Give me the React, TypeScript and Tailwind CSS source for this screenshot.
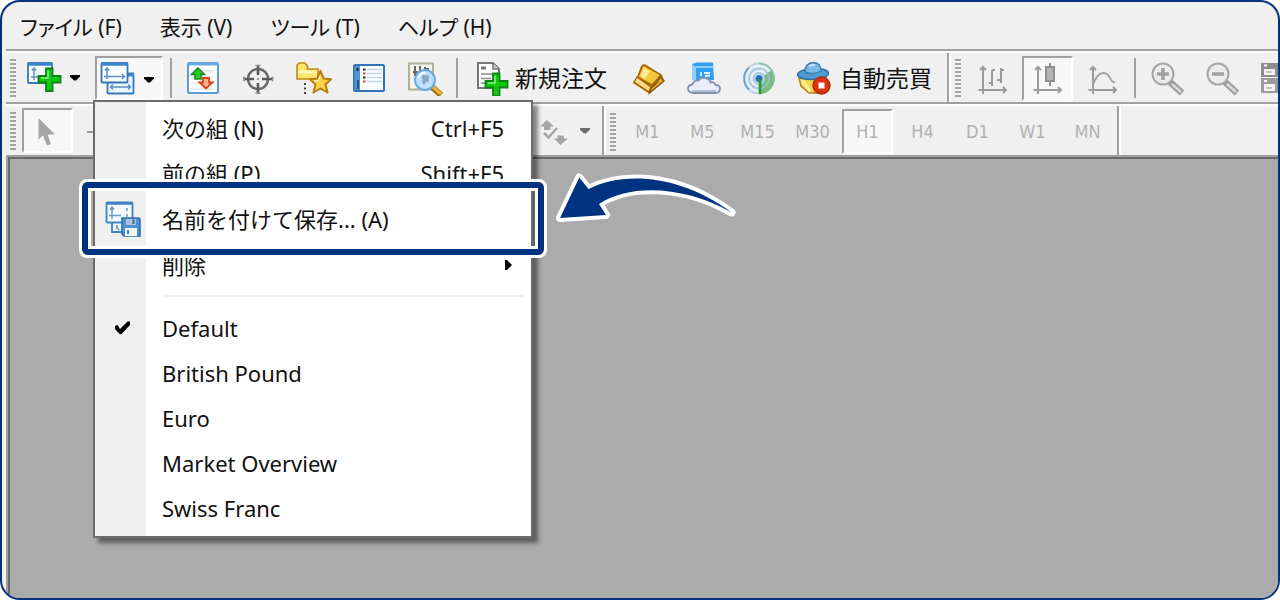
import { FC, ReactNode } from "react";
import clsx from "clsx";

type IconProps = { children: ReactNode };

const Icon: FC<IconProps> = ({ children }) => (
  <svg width="36" height="36" viewBox="0 0 36 36" fill="none" className="shrink-0" aria-hidden="true">
    {children}
  </svg>
);

const Caret: FC<{ className?: string }> = ({ className }) => (
  <svg width="10" height="6" viewBox="0 0 10 6" className={clsx("shrink-0", className)} aria-hidden="true">
    <path d="M0 0H10V1.5L6 5.5H4L0 1.5Z" fill="currentColor" />
  </svg>
);

const Grip = () => (
  <div className="mx-1 h-[38px] w-[6px] shrink-0 bg-[repeating-linear-gradient(#a3a3a3_0_2px,#f4f4f4_2px_4px)]" />
);

const Separator = () => <div className="h-10 w-[2px] shrink-0 bg-[#a0a0a0]" />;

const ToolButton: FC<{
  label: string;
  className?: string;
  pressed?: boolean;
  children: ReactNode;
}> = ({ label, className, pressed, children }) => (
  <button
    type="button"
    aria-label={label}
    className={clsx(
      "flex shrink-0 items-center justify-center",
      pressed && "border-2 border-t-[#a0a0a0] border-r-white border-b-white border-l-[#a0a0a0] bg-[#f7f7f7]",
      className
    )}
  >
    {children}
  </button>
);

// icons

const GreenPlus: FC<{ x: number; y: number }> = ({ x, y }) => (
  <g transform={`translate(${x} ${y})`}>
    <path d="M8 0.5H14.5V8H22.5V14.5H14.5V23H8V14.5H0.5V8H8Z" fill="#12c812" stroke="#0a8412" strokeWidth="1.8" />
    <path d="M10 2.5V10H3" stroke="#8af08a" strokeWidth="1.6" />
  </g>
);

const NewChartIcon = () => (
  <Icon>
    <rect x="2" y="3" width="24" height="20" rx="1" fill="#f3faff" stroke="#3576b8" strokeWidth="1.8" />
    <path d="M1.5 4H26.5" stroke="#3c83cc" strokeWidth="3.4" />
    <path d="M8 8V20M6 10.5L8 8L10 10.5M5 17H13" stroke="#6a93bd" strokeWidth="1.5" />
    <GreenPlus x={12} y={8} />
  </Icon>
);

const ChartsIcon = () => (
  <Icon>
    <rect x="7.5" y="14" width="26" height="19.5" rx="1" fill="#eef6fd" stroke="#3576b8" strokeWidth="1.8" />
    <path d="M28 14.5H34" stroke="#3c83cc" strokeWidth="4" />
    <path d="M11 27H30M13 24.5L10.5 27L13 29.5M28 24.5L30.5 27L28 29.5" stroke="#5d8fc0" strokeWidth="1.5" />
    <rect x="1.5" y="3" width="26" height="19.5" rx="1" fill="#f8fcff" stroke="#3576b8" strokeWidth="1.8" />
    <path d="M1 4H28" stroke="#3c83cc" strokeWidth="3.4" />
    <path d="M7 8V19M5 10.5L7 8L9 10.5M4 16.5H24M22 14L24.5 16.5L22 19" stroke="#5d8fc0" strokeWidth="1.5" />
  </Icon>
);

const MarketWatchIcon = () => (
  <Icon>
    <rect x="3" y="3" width="30" height="30" rx="1.5" fill="#fdfeff" stroke="#5b9bd8" strokeWidth="2" />
    <path d="M3 4H33" stroke="#68a9e4" strokeWidth="3" />
    <path d="M6 11H30M6 17H30M6 23H30M6 29H30" stroke="#e3e6ec" strokeWidth="1.4" />
    <path d="M13 8L19.5 14.5H16V19H10V14.5H6.5Z" fill="#2fc52f" stroke="#16901b" strokeWidth="1.6" />
    <path d="M21 28.5L14.5 22.5H18V18H24V22.5H27.5Z" fill="#ffb295" stroke="#e0400f" strokeWidth="1.8" />
  </Icon>
);

const CrosshairIcon = () => (
  <Icon>
    <circle cx="18" cy="19" r="10" stroke="#6a6a6a" strokeWidth="2.4" />
    <path d="M18 5V15M18 23V34M3.5 19H14M22 19H33" stroke="#5c5c5c" strokeWidth="2.6" />
    <path d="M15.5 5.5H20.5M15.5 33H20.5M4 16.5V21.5M32.5 16.5V21.5" stroke="#8c8c8c" strokeWidth="1.6" />
    <circle cx="18" cy="19" r="1" fill="#777" />
  </Icon>
);

const NavigatorIcon = () => (
  <Icon>
    <path d="M1 19V5L3 3H9L11.5 6V9H22V19Z" fill="#fde56c" stroke="#bf8a17" strokeWidth="1.6" />
    <path d="M2.5 12H21" stroke="#fff7b8" strokeWidth="3" />
    <path d="M9 23V34" stroke="#333" strokeWidth="1.8" strokeDasharray="2 2.5" />
    <path
      d="M24.5 11L27.6 18.5L35 19.3L29.5 24.5L31.5 32.5L24.5 28.5L17.5 32.5L19.5 24.5L14 19.3L21.4 18.5Z"
      fill="#fbd04a"
      stroke="#b67c12"
      strokeWidth="2"
      strokeLinejoin="round"
    />
    <path d="M24.5 15L22.5 20.5L18 21" stroke="#fff0a6" strokeWidth="1.4" />
  </Icon>
);

const TerminalIcon = () => (
  <Icon>
    <rect x="3" y="5" width="30" height="26" rx="1.5" fill="#fbfdff" stroke="#2f74b8" strokeWidth="2" />
    <rect x="3.5" y="6" width="5.5" height="24" fill="#4f94d8" />
    <path d="M7 20V29" stroke="#3f516b" strokeWidth="2" />
    <path d="M6.5 8V11" stroke="#112233" strokeWidth="2" />
    <path d="M16 9.5H31M16 13.5H31M16 17.5H31M16 21.5H31" stroke="#bcd8f0" strokeWidth="1.4" />
    <path d="M12 9.5H14.5M12 17.5H14.5" stroke="#222" strokeWidth="2" />
    <path d="M12 13.5H14.5M12 21.5H14.5" stroke="#e34a1c" strokeWidth="2" />
  </Icon>
);

const TesterIcon = () => (
  <Icon>
    <rect x="1" y="3.5" width="24" height="26" fill="#f5f4ee" stroke="#b3ad9c" strokeWidth="2" />
    <path d="M7 6V16M5 12H10M12 6V12M17 7V12M17 9H21" stroke="#666" strokeWidth="2" />
    <path d="M24 27L33 35" stroke="#a66d0f" strokeWidth="6" />
    <path d="M25 27L33 34" stroke="#f2b632" strokeWidth="3" />
    <circle cx="17" cy="20" r="10" fill="#b9defa" fillOpacity="0.92" stroke="#6aaade" strokeWidth="2" />
    <path d="M14 17H19V22M16 15V24" stroke="#86a9c4" strokeWidth="3.4" />
    <path d="M10.5 18Q12 13 17 12.5" stroke="#f2fbff" strokeWidth="2" />
  </Icon>
);

const NewOrderIcon = () => (
  <Icon>
    <path d="M2 3H17L23 9V28H2Z" fill="#fff" stroke="#767676" strokeWidth="2" />
    <path d="M17 3V9H23" fill="#ccc" stroke="#767676" strokeWidth="1.6" />
    <path d="M5 8H10" stroke="#777" strokeWidth="3" />
    <path d="M5 14H19M5 18.5H15M5 23H12" stroke="#8b8b8b" strokeWidth="1.6" />
    <GreenPlus x={9} y={13} />
  </Icon>
);

const EditorIcon = () => (
  <Icon>
    <path d="M2 23L6 17L10 6L14 4L31 15L33.5 21L18 33.5Z" fill="#b9730c" />
    <path d="M12 5L30 15L21 25L7 17Z" fill="#f2c93c" stroke="#a5650a" strokeWidth="1.4" />
    <path d="M13 7.5L19 11L14 19L9.5 16Z" fill="#ffeb94" />
    <path d="M3 22L6 17L20 27L18 32Z" fill="#ffdc80" stroke="#a5650a" strokeWidth="1.4" />
    <path d="M20 28Q26 24 29 17L33 21L18.5 33Z" fill="#e0a743" stroke="#8e5207" strokeWidth="1.4" />
  </Icon>
);

const CloudIcon = () => (
  <Icon>
    <path d="M6 4L11 2.5H27L28 20H6Z" fill="#2f9ff0" />
    <path d="M6 4L10 7V20H6Z" fill="#8fd0ff" />
    <path d="M10 7H28" stroke="#a9deff" strokeWidth="1.6" />
    <path d="M15 16V12M18 13H24M19 16L24 15.5" stroke="#e6f6ff" strokeWidth="1.8" />
    <path
      d="M8 33Q2 33 2 28.5Q2 25 6.500 24.5Q8 19.5 12.5 20.5Q15 17 19.5 18Q24 19 24.5 22.5Q28 21 29.5 25Q34 25 34 29Q34 33 29 33Z"
      fill="#e8edf6"
      stroke="#8290b3"
      strokeWidth="1.8"
    />
    <path d="M6 31H30" stroke="#b3bfd8" strokeWidth="2" />
  </Icon>
);

const SignalsIcon = () => (
  <Icon>
    <circle cx="18" cy="18.5" r="15" fill="#e9f0f4" stroke="#bcd3e2" strokeWidth="1.8" />
    <path d="M18 18.5L31 10A15.5 15.5 0 0 1 18 34Z" fill="#76be7a" />
    <path d="M18 3.5A15 15 0 0 1 33 18.5" stroke="#8fbfae" strokeWidth="2" />
    <path d="M8 7.5A15 15 0 0 0 8 29.5" stroke="#6ea0cb" strokeWidth="2" />
    <circle cx="18" cy="18.5" r="10" stroke="#9dbddb" strokeWidth="2" strokeOpacity="0.8" />
    <circle cx="18" cy="18.5" r="5.5" fill="#d5e5f2" stroke="#a5c5e2" strokeWidth="1.8" />
    <circle cx="18" cy="18.5" r="3.5" fill="#2d6fb4" />
    <path d="M19 19V34" stroke="#1f9a33" strokeWidth="2.6" />
  </Icon>
);

const AutoTradingIcon = () => (
  <Icon>
    <path d="M3 18L5 26L13 33H24L30 18Z" fill="#f6d54f" stroke="#b58617" strokeWidth="1.5" />
    <path d="M6 20L14 31" stroke="#fff1a0" strokeWidth="3" />
    <ellipse cx="17" cy="14" rx="15.5" ry="5.5" transform="rotate(-3 17 14)" fill="#4e9bd1" stroke="#2d6f9f" strokeWidth="1.4" />
    <path d="M9 12Q9 3 17.5 2.5Q25 3 25 11Q17 15.5 9 12Z" fill="#77bbe6" stroke="#3c82b3" strokeWidth="1.4" />
    <path d="M13 6.5Q15 4.5 19 5" stroke="#c5e8fb" strokeWidth="2" />
    <circle cx="25.5" cy="25.5" r="8.5" fill="#d9340f" stroke="#ae2a10" strokeWidth="1.4" />
    <rect x="22.5" y="22.5" width="6" height="6" fill="#fff" />
  </Icon>
);

const Axes = () => (
  <path
    d="M8 7V34M5 10L8 7L11 10M3.500 30H31M28 27L31 30L28 33"
    stroke="#9b9b9b"
    strokeWidth="2"
  />
);

const BarChartIcon = () => (
  <Icon>
    <Axes />
    <path d="M17 10V26M14 23H17M17 10H20M26 8V23M22 20H26M26 10H29" stroke="#9b9b9b" strokeWidth="2" />
  </Icon>
);

const CandleIcon = () => (
  <Icon>
    <Axes />
    <path d="M20 3V26" stroke="#8f8f8f" strokeWidth="2" />
    <rect x="16" y="7" width="8" height="14" fill="#b5b5b5" stroke="#8f8f8f" strokeWidth="2" />
  </Icon>
);

const LineChartIcon = () => (
  <Icon>
    <Axes />
    <path d="M8 24Q13 13 18 13T25 18T30 22" stroke="#a3a3a3" strokeWidth="2" />
  </Icon>
);

const ZoomIcon: FC<{ plus?: boolean }> = ({ plus }) => (
  <Icon>
    <path d="M21 22L33 33" stroke="#9d9d9d" strokeWidth="6.5" />
    <path d="M23 24L32 32" stroke="#dcdcdc" strokeWidth="2.5" />
    <circle cx="14" cy="14" r="10.5" fill="#ececec" stroke="#a6a6a6" strokeWidth="2" />
    <path d={plus ? "M14 8V20M8 14H20" : "M8 14H20"} stroke="#a0a0a0" strokeWidth="3.6" />
  </Icon>
);

const TileIcon = () => (
  <Icon>
    <rect x="2" y="3" width="31" height="14" fill="#8d8d8d" />
    <rect x="2" y="18" width="31" height="15" fill="#9b9b9b" />
    <path d="M5 9H16V15H5ZM20 9H30V15H20ZM5 24H16V31H5ZM20 24H30V31H20Z" fill="#f4f4f4" />
    <path d="M5 5.500H8M20 5.500H23M5 21H8M20 21H23" stroke="#fff" strokeWidth="2" />
    <path d="M7 12H13M7 28H13" stroke="#b5b5b5" strokeWidth="1.5" />
  </Icon>
);

const CursorIcon = () => (
  <Icon>
    <path d="M8.500 5V26.500L13 22.500L17 32.500L21 31L17.500 21.500H25Z" fill="#a4a4a4" />
  </Icon>
);

const ArrowsIcon = () => (
  <Icon>
    <path d="M11 7L18 13.500H14.500V17H8V13.500H4Z" fill="#a6a6a6" />
    <path d="M24.500 32L18 25.500H21.500V22.500H28V25.500H32Z" fill="#a6a6a6" />
    <path d="M8 20L12.500 24.500L21 15" stroke="#a6a6a6" strokeWidth="2.5" />
  </Icon>
);

const SaveTemplateIcon = () => (
  <Icon>
    <path d="M7 20H20V31H7Z" fill="#eef6fd" stroke="#3f82c2" strokeWidth="1.8" />
    <rect x="1.5" y="1.5" width="26" height="20" rx="1" fill="#f4faff" stroke="#3f82c2" strokeWidth="1.8" />
    <path d="M1 2.500H28" stroke="#3f82c2" strokeWidth="2.6" />
    <path d="M7 6V18M5 8.500L7 6L9 8.500M4 14.500H16M22 7V10M22 13V16" stroke="#6d99c4" strokeWidth="1.5" />
    <path d="M12 24V27L14.500 29" stroke="#6d99c4" strokeWidth="1.6" />
    <path d="M17 17H34L35 18V35H19L17 33Z" fill="#4e91cf" stroke="#2f70b2" strokeWidth="1.6" />
    <rect x="21" y="18" width="10" height="6" fill="#a8c2dc" />
    <rect x="20" y="27" width="12" height="8" fill="#f3f8fd" />
    <path d="M23 29V33" stroke="#3f82c2" strokeWidth="2" />
    <rect x="27.5" y="18.5" width="2" height="4.5" fill="#47688a" />
  </Icon>
);

// drop-down menu

const MenuRow: FC<{
  label: string;
  shortcut?: string;
  icon?: ReactNode;
  submenu?: boolean;
  highlighted?: boolean;
}> = ({ label, shortcut, icon, submenu, highlighted }) => (
  <button
    type="button"
    role="menuitem"
    className={clsx(
      "relative flex w-full items-center pr-[27px] text-left",
      highlighted ? "z-10 h-[47px]" : "h-[45px]"
    )}
  >
    <span className="mr-4 flex w-[51px] shrink-0 items-center justify-center pl-1">{icon}</span>
    <span className="grow whitespace-nowrap">{label}</span>
    {shortcut && <span>{shortcut}</span>}
    {submenu && (
      <svg width="7" height="10" viewBox="0 0 7 10" className="-mr-2" aria-hidden="true">
        <path d="M0 0H2L7 5L2 10H0Z" fill="#000" />
      </svg>
    )}
    {highlighted && (
      <span className="absolute -inset-y-4 -right-4 -left-4 rounded-lg border-[3px] border-white">
        <span className="block h-full rounded-md border-[6px] border-[#00337f]">
          <span className="block h-full border-[3px] border-white" />
        </span>
      </span>
    )}
  </button>
);

const CheckMark = () => (
  <svg width="15" height="14" viewBox="0 0 15 14" aria-hidden="true">
    <path d="M0 5L2.5 4L5 8L12.5 0.5H15V4L6.5 13H4.5L0 8Z" fill="#000" />
  </svg>
);

const ProfilesMenu = () => (
  <div
    role="menu"
    className="absolute top-full -left-0.5 z-20 w-[440px] border-2 border-[#6b6b6b] bg-[linear-gradient(90deg,#f0f0f0_51px,#fff_51px)] pt-[3px] pb-1.5 shadow-[5px_5px_4px_rgba(0,0,0,0.45)]"
  >
    <MenuRow label="次の組 (N)" shortcut="Ctrl+F5" />
    <MenuRow label="前の組 (P)" shortcut="Shift+F5" />
    <MenuRow label="名前を付けて保存... (A)" icon={<SaveTemplateIcon />} highlighted />
    <MenuRow label="削除" submenu />
    <div className="mt-2 mr-1.5 mb-2 ml-[67px] h-[2px] bg-[#efefef]" />
    <MenuRow label="Default" icon={<CheckMark />} />
    <MenuRow label="British Pound" />
    <MenuRow label="Euro" />
    <MenuRow label="Market Overview" />
    <MenuRow label="Swiss Franc" />
  </div>
);

const CalloutArrow = () => (
  <svg width="186" height="56" viewBox="552 169 186 56" className="absolute top-[167px] left-[550px]" aria-hidden="true">
    <path
      d="M560 218L579.3 177.5L588.5 189C622 172 678 173 731.5 212.5C686 186 630 183 599 204L606 215Z"
      fill="#00337f"
      stroke="#fff"
      strokeWidth="8"
      strokeLinejoin="round"
      paintOrder="stroke"
    />
  </svg>
);

const menus = ["ファイル (F)", "表示 (V)", "ツール (T)", "ヘルプ (H)"];
const periods = ["M1", "M5", "M15", "M30", "H1", "H4", "D1", "W1", "MN"];

export default function App() {
  return (
    <div className="h-screen bg-white">
      <div className="relative flex h-full flex-col overflow-hidden rounded-[20px] border-2 border-[#00337f] bg-[#f0f0f0] pl-1 font-['Noto_Sans','Noto_Sans_CJK_JP',sans-serif] text-[22px] leading-none text-[#111]">
        <nav className="flex h-[49px] shrink-0 items-center gap-[38px] border-b-2 border-[#a0a0a0] pt-1 pl-[14px] text-[21px] [font-feature-settings:'palt']">
          {menus.map((menu) => (
            <button key={menu} type="button" className="whitespace-nowrap">
              {menu}
            </button>
          ))}
        </nav>

        <div className="flex h-[53px] shrink-0 border-t-2 border-b-2 border-t-white border-b-[#a0a0a0]">
          <div className="flex w-[943px] shrink-0 items-center border-r-2 border-[#a0a0a0] pt-px">
            <Grip />
            <ToolButton label="New chart" className="mr-2 ml-0.5 gap-2 px-1">
              <NewChartIcon />
              <Caret className="text-black" />
            </ToolButton>
            <div className="relative ml-[3px]">
              <div className="flex">
                <ToolButton label="Profiles" pressed className="h-[44px] w-[68px] gap-2 pr-1">
                  <ChartsIcon />
                  <Caret className="mt-1 text-black" />
                </ToolButton>
              </div>
              <ProfilesMenu />
            </div>
            <div className="ml-[7px] flex items-center">
              <Separator />
              <ToolButton label="Market watch" className="ml-[3px] w-[55px]">
                <MarketWatchIcon />
              </ToolButton>
              <ToolButton label="Data window" className="w-14">
                <CrosshairIcon />
              </ToolButton>
              <ToolButton label="Navigator" className="w-[55px]">
                <NavigatorIcon />
              </ToolButton>
              <ToolButton label="Terminal" className="w-[55px]">
                <TerminalIcon />
              </ToolButton>
              <ToolButton label="Strategy tester" className="w-[60px]">
                <TesterIcon />
              </ToolButton>
              <Separator />
            </div>
            <ToolButton label="新規注文" className="ml-[18px] gap-[3px] text-[23px]">
              <NewOrderIcon />
              新規注文
            </ToolButton>
            <ToolButton label="MetaEditor" className="ml-[14px] w-[55px]">
              <EditorIcon />
            </ToolButton>
            <ToolButton label="Hosting" className="w-[55px]">
              <CloudIcon />
            </ToolButton>
            <ToolButton label="Signals" className="w-[55px]">
              <SignalsIcon />
            </ToolButton>
            <ToolButton label="自動売買" className="ml-[10px] gap-2 text-[23px]">
              <AutoTradingIcon />
              自動売買
            </ToolButton>
          </div>
          <div className="flex grow items-center overflow-hidden border-l-2 border-white pt-px">
            <Grip />
            <ToolButton label="Bar chart" className="w-[55px]">
              <BarChartIcon />
            </ToolButton>
            <ToolButton label="Candlesticks" pressed className="mx-[2px] h-[45px] w-[51px]">
              <CandleIcon />
            </ToolButton>
            <ToolButton label="Line chart" className="mr-1 w-[55px]">
              <LineChartIcon />
            </ToolButton>
            <Separator />
            <ToolButton label="Zoom in" className="ml-[3px] w-[55px]">
              <ZoomIcon plus />
            </ToolButton>
            <ToolButton label="Zoom out" className="w-[55px]">
              <ZoomIcon />
            </ToolButton>
            <ToolButton label="Tile windows" className="ml-[10px]">
              <TileIcon />
            </ToolButton>
          </div>
        </div>

        <div className="flex h-[51px] shrink-0 border-t-2 border-white">
          <div className="flex w-[598px] shrink-0 items-center border-r-2 border-[#a0a0a0]">
            <Grip />
            <ToolButton label="Cursor" pressed className="ml-[2px] h-[45px] w-[51px]">
              <CursorIcon />
            </ToolButton>
            <ToolButton label="Horizontal line" className="ml-[14px]">
              <Icon>
                <path d="M0 19H32" stroke="#9b9b9b" strokeWidth="2" />
              </Icon>
            </ToolButton>
            <ToolButton label="Arrows" className="mr-3 ml-auto gap-2 text-[#6e6e6e]">
              <ArrowsIcon />
              <Caret />
            </ToolButton>
          </div>
          <div className="flex w-[515px] shrink-0 items-center border-r-2 border-l-2 border-r-[#a0a0a0] border-l-white pt-0.5 font-['DejaVu_Sans_Condensed','DejaVu_Sans',sans-serif] text-[18px] text-[#b0b0b0]">
            <Grip />
            {periods.map((period) => (
              <ToolButton
                key={period}
                label={period}
                pressed={period === "H1"}
                className={period === "H1" ? "mx-[2px] h-[45px] w-[51px]" : "w-[55px]"}
              >
                {period}
              </ToolButton>
            ))}
          </div>
          <div className="grow border-l-2 border-white" />
        </div>

        <main className="grow border-t-2 border-l-2 border-[#a0a0a0]">
          <div className="h-full border-t-2 border-l-2 border-[#696969] bg-[#ababab]" />
        </main>

        <CalloutArrow />
      </div>
    </div>
  );
}
